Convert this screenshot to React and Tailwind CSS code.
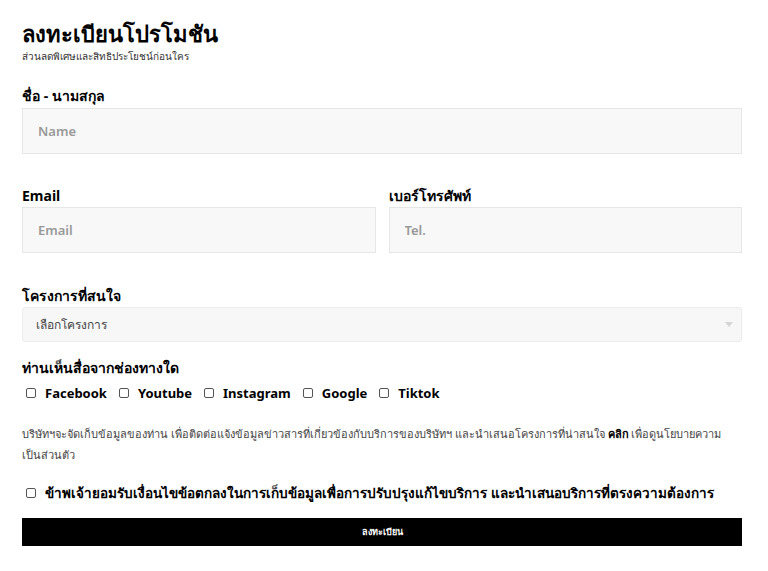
import React, { useState } from "react";

const channels = ["Facebook", "Youtube", "Instagram", "Google", "Tiktok"];

const Box = () => (
  <span className="inline-block w-[10px] h-[10px] border border-[#555] rounded-[2px] bg-white shrink-0" />
);

export default function App() {
  const [form, setForm] = useState({ name: "", email: "", tel: "", project: "" });

  const handleChange = (e) => {
    setForm({ ...form, [e.target.name]: e.target.value });
  };

  return (
    <div
      className="w-[768px] h-[571px] bg-white text-black pl-[22px] pr-[26px] pt-[19px]"
      style={{ fontFamily: '"Noto Sans", "Open Sans", sans-serif' }}
    >
      {/* หัวข้อ */}
      <h1 className="text-[22px] font-bold leading-[28px]">ลงทะเบียนโปรโมชัน</h1>
      <p className="text-[10px] leading-[14px] text-[#333] mt-[2px]">ส่วนลดพิเศษและสิทธิประโยชน์ก่อนใคร</p>

      {/* ชื่อ */}
      <label className="block text-[14px] font-bold leading-[20px] mt-[23px]">ชื่อ - นามสกุล</label>
      <input
        name="name"
        value={form.name}
        onChange={handleChange}
        placeholder="Name"
        className="block w-full h-[46px] mt-[2px] bg-[#f8f8f8] border border-[#e6e6e6] px-[15px] text-[13px] font-semibold outline-none placeholder:text-[#999]"
      />

      {/* email / tel */}
      <div className="grid grid-cols-2 gap-[13px] mt-[32px]">
        <div>
          <label className="block text-[14px] font-bold leading-[20px]">Email</label>
          <input
            name="email"
            value={form.email}
            onChange={handleChange}
            placeholder="Email"
            className="block w-full h-[46px] mt-[1px] bg-[#f8f8f8] border border-[#e6e6e6] px-[15px] text-[13px] font-semibold outline-none placeholder:text-[#999]"
          />
        </div>
        <div>
          <label className="block text-[14px] font-bold leading-[20px]">เบอร์โทรศัพท์</label>
          <input
            name="tel"
            value={form.tel}
            onChange={handleChange}
            placeholder="Tel."
            className="block w-full h-[46px] mt-[1px] bg-[#f8f8f8] border border-[#e6e6e6] px-[15px] text-[13px] font-semibold outline-none placeholder:text-[#999]"
          />
        </div>
      </div>

      {/* โครงการ */}
      <label className="block text-[14px] font-bold leading-[20px] mt-[33px]">โครงการที่สนใจ</label>
      <div className="relative mt-[1px]">
        <select
          name="project"
          value={form.project}
          onChange={handleChange}
          className="block w-full h-[35px] appearance-none bg-[#f7f7f7] border border-[#ececec] rounded-[3px] px-[13px] text-[12px] text-[#444] outline-none"
        >
          <option value="">เลือกโครงการ</option>
        </select>
        <span className="absolute right-[9px] top-[15px] w-0 h-0 border-l-[4px] border-r-[4px] border-t-[5px] border-l-transparent border-r-transparent border-t-[#d5d5d5]" />
      </div>

      {/* ช่องทาง */}
      <p className="text-[14px] font-bold leading-[20px] mt-[16px]">ท่านเห็นสื่อจากช่องทางใด</p>
      <div className="flex items-center gap-[12px] mt-[6px] ml-[4px] text-[13px] font-bold leading-[18px]">
        {channels.map((c) => (
          <label key={c} className="flex items-center gap-[9px]">
            <Box />
            {c}
          </label>
        ))}
      </div>

      {/* นโยบาย */}
      <p className="text-[11px] leading-[21px] text-[#444] mt-[21px]">
        บริษัทฯจะจัดเก็บข้อมูลของท่าน เพื่อติดต่อแจ้งข้อมูลข่าวสารที่เกี่ยวข้องกับบริการของบริษัทฯ และนำเสนอโครงการที่น่าสนใจ{" "}
        <span className="font-bold text-black">คลิก</span> เพื่อดูนโยบายความ
        <br />
        เป็นส่วนตัว
      </p>

      <label className="flex items-center gap-[9px] mt-[19px] ml-[4px] text-[13.5px] font-bold leading-[18px]">
        <Box />
        ข้าพเจ้ายอมรับเงื่อนไขข้อตกลงในการเก็บข้อมูลเพื่อการปรับปรุงแก้ไขบริการ และนำเสนอบริการที่ตรงความต้องการ
      </label>

      <button className="block w-full h-[28px] mt-[16px] bg-black text-white text-[9px] font-bold">
        ลงทะเบียน
      </button>
    </div>
  );
}
